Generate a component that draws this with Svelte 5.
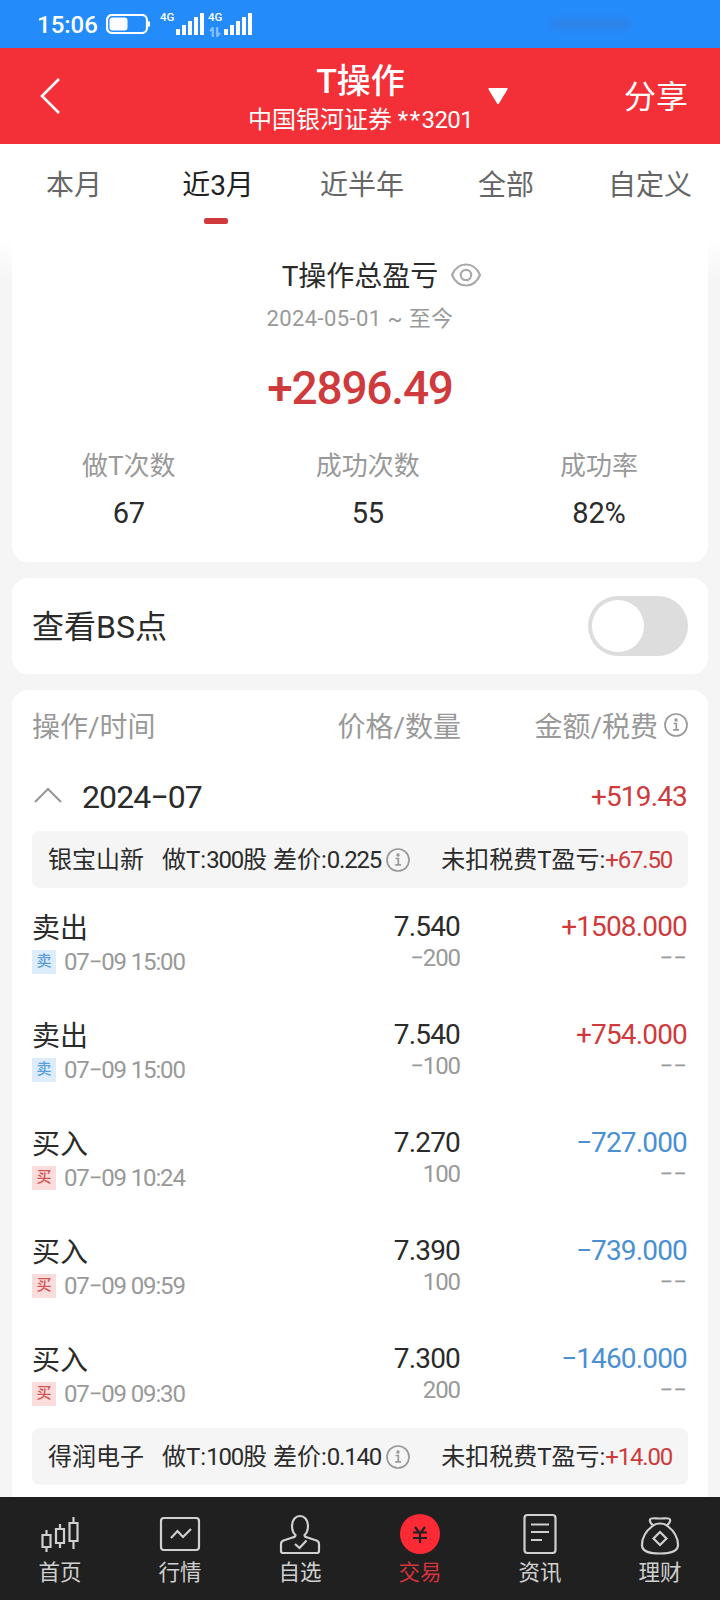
<script>
  const tabs = ["本月", "近3月", "近半年", "全部", "自定义"];
  let activeTab = $state("近3月");
  let showPoints = $state(false);
  let open = $state(true);

  const stats = [
    { label: "做T次数", value: "67" },
    { label: "成功次数", value: "55" },
    { label: "成功率", value: "82%" },
  ];

  const groups = [
    {
      name: "银宝山新",
      shares: 300,
      diff: "0.225",
      profit: "+67.50",
      trades: [
        { side: "sell", time: "07−09 15:00", price: "7.540", qty: "−200", amount: "+1508.000" },
        { side: "sell", time: "07−09 15:00", price: "7.540", qty: "−100", amount: "+754.000" },
        { side: "buy", time: "07−09 10:24", price: "7.270", qty: "100", amount: "−727.000" },
        { side: "buy", time: "07−09 09:59", price: "7.390", qty: "100", amount: "−739.000" },
        { side: "buy", time: "07−09 09:30", price: "7.300", qty: "200", amount: "−1460.000" },
      ],
    },
    { name: "得润电子", shares: 100, diff: "0.140", profit: "+14.00", trades: [] },
  ];

  const nav = [
    { id: "home", label: "首页" },
    { id: "market", label: "行情" },
    { id: "watch", label: "自选" },
    { id: "trade", label: "交易" },
    { id: "news", label: "资讯" },
    { id: "wealth", label: "理财" },
  ];
  let activeNav = $state("trade");
</script>

{#snippet infoIcon()}
  <svg class="info" viewBox="0 0 24 24" width="24" height="24">
    <circle cx="12" cy="12" r="11" />
    <path d="M9.6 10.5h2.7v6.3M9.2 16.8h5.8" />
    <circle class="info__dot" cx="12" cy="7" r="1.7" />
  </svg>
{/snippet}

{#snippet signal()}
  <svg class="signal" viewBox="0 0 28 24" width="28" height="24">
    <path d="M2 17v6M8 13v10M14 9v14M20 5v18M26 1v22" />
  </svg>
{/snippet}

<div class="app">
  <div class="status">
    <span class="status__time">15:06</span>
    <svg class="battery" viewBox="0 0 44 20" width="44" height="20">
      <rect x="1" y="1" width="40" height="18" rx="5" />
      <path d="M43 7.5v5" />
      <rect class="battery__level" x="3.5" y="3.5" width="18" height="13" rx="3" />
    </svg>
    <span class="status__net">4G</span>
    {@render signal()}
    <span class="status__net status__net--data">
      4G
      <svg viewBox="0 0 12 10" width="12" height="10"><path d="M3.8 10V1L1 4M8.2 0v9L11 6" /></svg>
    </span>
    {@render signal()}
    <span class="status__haze"></span>
  </div>

  <header class="header">
    <button class="header__back" aria-label="返回">
      <svg viewBox="0 0 20 36" width="20" height="36"><path d="M19 1 2 18l17 17" /></svg>
    </button>
    <div class="header__center">
      <h1 class="header__title">T操作</h1>
      <div class="header__account">中国银河证券 <span class="stars">**</span><span class="num">3201</span></div>
    </div>
    <svg class="header__caret" viewBox="0 0 20 16" width="20" height="16">
      <path d="M1.5 1h17L10 15z" />
    </svg>
    <button class="header__share">分享</button>
  </header>

  <nav class="tabs">
    {#each tabs as tab}
      <button class="tab" class:tab--active={tab === activeTab} onclick={() => (activeTab = tab)}>
        <span class="tab__label">{tab}</span>
      </button>
    {/each}
  </nav>

  <main class="content">
    <section class="card summary">
      <h2 class="summary__title">
        <span>T操作总盈亏</span>
        <svg class="eye" viewBox="0 0 30 24" width="30" height="24">
          <path d="M1 12C4 5 9 1.5 15 1.5S26 5 29 12c-3 7-8 10.500-14 10.500S4 19 1 12z" />
          <circle cx="15" cy="12" r="5.200" />
        </svg>
      </h2>
      <div class="summary__range">2024-05-01 ~ 至今</div>
      <div class="summary__total num">+2896.49</div>
      <div class="stats">
        {#each stats as stat}
          <div class="stat">
            <span class="stat__label">{stat.label}</span>
            <span class="stat__value num">{stat.value}</span>
          </div>
        {/each}
      </div>
    </section>

    <section class="card points">
      <span class="points__label">查看BS点</span>
      <button
        class="switch"
        class:switch--on={showPoints}
        aria-label="查看BS点"
        onclick={() => (showPoints = !showPoints)}
      ></button>
    </section>

    <section class="card records">
      <div class="records__head">
        <span>操作/时间</span>
        <span class="right">价格/数量</span>
        <span class="records__fee">金额/税费{@render infoIcon()}</span>
      </div>
      <button class="month" onclick={() => (open = !open)}>
        <svg class="month__arrow" viewBox="0 0 30 18" width="30" height="18"><path d="M2 16 15 3l13 13" /></svg>
        <span class="month__name num">2024−07</span>
        <span class="month__total num">+519.43</span>
      </button>

      {#if open}
        {#each groups as group}
          <div class="group">
            <span class="group__name">{group.name}</span>
            <span class="group__detail">做T:<span class="num">{group.shares}</span>股 差价:<span class="num">{group.diff}</span></span>
            {@render infoIcon()}
            <span class="group__profit">未扣税费T盈亏:<span class="num up">{group.profit}</span></span>
          </div>
          {#each group.trades as trade}
            <div class="trade">
              <div class="trade__cell trade__cell--left">
                <span class="trade__side">{trade.side === "sell" ? "卖出" : "买入"}</span>
                <span class="trade__time num">
                  <i class="tag tag--{trade.side}">{trade.side === "sell" ? "卖" : "买"}</i>{trade.time}
                </span>
              </div>
              <div class="trade__cell">
                <span class="trade__main num">{trade.price}</span>
                <span class="trade__sub num">{trade.qty}</span>
              </div>
              <div class="trade__cell">
                <span class="trade__main num {trade.side === 'sell' ? 'up' : 'down'}">{trade.amount}</span>
                <span class="trade__sub trade__sub--empty">−−</span>
              </div>
            </div>
          {/each}
        {/each}
      {/if}
    </section>
  </main>

  <nav class="bottom">
    {#each nav as item}
      <button class="bottom__item" class:bottom__item--active={item.id === activeNav} onclick={() => (activeNav = item.id)}>
        <svg viewBox="0 0 44 44" width="44" height="44">
          {#if item.id === "home"}
            <path d="M4.500 23h8v12h-8zM8.500 18v5M8.500 35v5M18 17h8v14h-8zM22 12v5M22 31v5M31.500 11h8v18h-8zM35.500 5v6M35.500 29v8" />
          {:else if item.id === "market"}
            <rect x="3" y="6" width="38" height="32" rx="3" />
            <path d="m13 26 6.500-7 5.500 6 8-8" />
          {:else if item.id === "watch"}
            <path d="M17.500 23C14.500 20.500 14 17 14 13.500 14 8 17.500 4 22 4s8 4 8 9.500c0 3.500-.5 7-3.500 9.500 0 2 1 2 3 2.500l9 3c2 .8 2.500 1.800 2.500 3.500v7c0 1.500-.5 2-2 2H5c-1.500 0-2-.5-2-2v-7c0-1.700.5-2.700 2.500-3.500l9-3c2-.5 3-.5 3-2.500z" />
            <path d="m17 32 4.500 4 7-7.500" />
          {:else if item.id === "trade"}
            <circle class="coin" cx="22" cy="22" r="20" />
            <path class="yen" d="m17 15 5 6.500 5-6.500M22 21v10M15 20.500h14M15 26h14" />
          {:else if item.id === "news"}
            <rect x="6.500" y="3" width="31" height="38" rx="3" />
            <path d="M13 12.500h18M13 20h18M13 28h11" />
          {:else}
            <path d="M14.500 13c-1.500-1.500-3-4-2.500-5.500C12.700 5.300 17 6.500 22 6.500s9.300-1.200 10 1c.5 1.500-1 4-2.500 5.500" />
            <path d="M14.500 14c2-1.800 4.500-2.500 7.500-2.500s5.500.7 7.500 2.500c6.500 5 10.500 12 10.500 19 0 7-8 8.500-18 8.500S4 40 4 33c0-7 4-14 10.500-19z" />
            <path d="m22 20 6.500 6.500L22 33l-6.500-6.500z" />
          {/if}
        </svg>
        <span>{item.label}</span>
      </button>
    {/each}
  </nav>
</div>

<style>
  :global(body) {
    background: #f5f5f5;
  }

  .app {
    display: flex;
    flex-direction: column;
    width: 720px;
    height: 1600px;
    overflow: hidden;
    background: #f5f5f5;
    color: #2b2b2b;
    font-family: Roboto, "Noto Sans CJK SC", sans-serif;
  }

  button {
    padding: 0;
    border: 0;
    background: none;
    color: inherit;
    font: inherit;
  }

  h1,
  h2 {
    margin: 0;
    font-weight: 400;
  }

  svg {
    flex: none;
    fill: none;
    stroke: currentColor;
    stroke-width: 2.2;
  }

  .num {
    font-weight: 450;
    letter-spacing: -0.03em;
  }

  .up {
    color: #cf3a3c;
  }

  .down {
    color: #4a90d2;
  }

  .right {
    text-align: right;
  }

  /* status bar */
  .status {
    flex: none;
    display: flex;
    align-items: center;
    height: 48px;
    padding-left: 37px;
    background: #248bfb;
    color: #fff;
  }

  .status__time {
    width: 69px;
    padding-top: 2px;
    font-size: 24px;
    font-weight: 500;
    line-height: 46px;
  }

  .battery__level {
    fill: #fff;
    stroke: none;
  }

  .status__net {
    align-self: flex-start;
    width: 15px;
    margin: 10px 1px 0 10px;
    font-size: 11.5px;
    font-weight: 500;
    line-height: 15px;
  }

  .status__net--data {
    display: flex;
    flex-direction: column;
    margin-left: 4px;
  }

  .status__net--data svg {
    margin: 2px 0 0 1px;
    opacity: 0.45;
  }

  .signal {
    stroke-width: 4;
  }

  .status__haze {
    width: 80px;
    height: 8px;
    margin-left: 298px;
    border-radius: 4px;
    background: #3b78cc;
    filter: blur(4px);
    opacity: 0.55;
  }

  /* header */
  .header {
    flex: none;
    display: grid;
    grid-template-columns: 240px 240px 28px 1fr;
    align-items: center;
    height: 96px;
    background: #f32f38;
    color: #fff;
  }

  .header__back {
    display: flex;
    padding-left: 40px;
  }

  .header__back svg {
    stroke-width: 2.6;
  }

  .header__center {
    display: flex;
    flex-direction: column;
    align-items: center;
    padding: 5px 0 0 1px;
    white-space: nowrap;
  }

  .header__title {
    font-size: 34px;
    font-weight: 500;
    line-height: 42px;
  }

  .header__account {
    font-size: 24px;
    line-height: 36px;
  }

  .header__account .num {
    letter-spacing: -0.6px;
  }

  .stars {
    letter-spacing: 1.5px;
  }

  .header__caret {
    margin-left: 8px;
    fill: #fff;
    stroke-linejoin: round;
  }

  .header__share {
    padding: 0 32px 4px 0;
    font-size: 32px;
    text-align: right;
  }

  /* period tabs */
  .tabs {
    flex: none;
    display: grid;
    grid-template-columns: repeat(5, 144px);
    height: 96px;
    background: #fff;
  }

  .tab {
    display: flex;
    flex-direction: column;
    align-items: center;
    padding-top: 21px;
    color: #666;
    font-size: 28px;
    line-height: 42px;
  }

  .tab__label {
    padding-left: 4px;
  }

  .tab--active {
    color: #222;
  }

  .tab--active::after {
    content: "";
    width: 24px;
    height: 6px;
    margin-top: 11px;
    border-radius: 2px;
    background: #cf3a3c;
  }

  /* cards */
  .content {
    flex: 1;
    display: flex;
    flex-direction: column;
    gap: 16px;
    min-height: 0;
    padding: 0 12px;
    overflow: hidden;
    background: linear-gradient(#fff, #f5f5f5 40px);
  }

  .card {
    flex: none;
    border-radius: 16px;
    background: #fff;
  }

  .summary {
    display: flex;
    flex-direction: column;
    align-items: center;
    height: 322px;
    border-radius: 0 0 16px 16px;
  }

  .summary__title {
    display: flex;
    align-items: center;
    gap: 13px;
    margin: 15px -43px 0 0;
    font-size: 28px;
    line-height: 40px;
  }

  .summary__title span {
    padding-top: 3px;
    line-height: 37px;
  }

  .eye {
    color: #aaa;
  }

  .summary__range {
    margin-top: 8px;
    color: #999;
    font-size: 22px;
    letter-spacing: 0.4px;
    line-height: 32px;
  }

  .summary__total {
    margin-top: 23px;
    color: #cf3a3c;
    font-size: 46px;
    font-weight: 500;
    letter-spacing: -1.2px;
    line-height: 60px;
  }

  .stats {
    align-self: stretch;
    display: flex;
    justify-content: space-between;
    margin-top: 30px;
    padding: 0 70px;
  }

  .stat {
    display: flex;
    flex-direction: column;
    align-items: center;
  }

  .stat__label {
    color: #999;
    font-size: 26px;
    line-height: 36px;
  }

  .stat__value {
    margin-top: 9px;
    font-size: 29px;
    letter-spacing: -0.2px;
    line-height: 40px;
  }

  .points {
    display: flex;
    align-items: center;
    justify-content: space-between;
    height: 96px;
    padding: 0 20px;
    font-size: 32px;
  }

  .points__label {
    padding-bottom: 4px;
  }

  .switch {
    display: flex;
    width: 100px;
    height: 60px;
    padding: 4px;
    border-radius: 30px;
    background: #ddd;
  }

  .switch::before {
    content: "";
    width: 52px;
    height: 52px;
    border-radius: 50%;
    background: #fff;
  }

  .switch--on {
    justify-content: flex-end;
    background: #cf3a3c;
  }

  /* trade records */
  .records {
    flex: 1;
    padding: 0 20px;
    border-radius: 16px 16px 0 0;
  }

  .records__head,
  .trade {
    display: grid;
    grid-template-columns: 200px 229px 227px;
  }

  .records__head {
    align-items: center;
    height: 72px;
    padding-bottom: 2px;
    box-sizing: border-box;
    color: #999;
    font-size: 28px;
  }

  .records__fee {
    display: flex;
    align-items: center;
    justify-content: flex-end;
    gap: 6px;
  }

  .info {
    color: #999;
    stroke-width: 1.7;
  }

  .info__dot {
    fill: currentColor;
    stroke: none;
  }

  .month {
    display: flex;
    align-items: center;
    width: 100%;
    height: 69px;
    padding: 0 1px;
  }

  .month__arrow {
    margin-top: -4px;
    color: #999;
  }

  .month__name {
    margin-left: 19px;
    font-size: 32px;
    letter-spacing: -0.9px;
  }

  .month__total {
    margin-left: auto;
    color: #cf3a3c;
    font-size: 28px;
  }

  .group {
    display: flex;
    align-items: center;
    height: 57px;
    padding: 0 16px;
    border-radius: 8px;
    background: #f5f5f5;
    font-size: 24px;
    line-height: 34px;
    white-space: nowrap;
  }

  .group__detail {
    margin: 0 5px 0 18px;
  }

  .group__profit {
    margin-left: auto;
  }

  .group .num {
    letter-spacing: -1.2px;
  }

  .trade {
    height: 108px;
  }

  .trade__cell {
    display: flex;
    flex-direction: column;
    align-items: flex-end;
    padding: 21px 1px 0 0;
  }

  .trade__cell--left {
    align-items: flex-start;
  }

  .trade__side {
    margin-top: 1px;
    font-size: 28px;
    line-height: 37px;
  }

  .trade__main {
    font-size: 28px;
    line-height: 36px;
  }

  .trade__time {
    display: flex;
    align-items: center;
    gap: 8px;
    color: #999;
    font-size: 24px;
    letter-spacing: -1.15px;
    line-height: 30px;
  }

  .trade__sub {
    color: #999;
    font-size: 24px;
    letter-spacing: -1.1px;
    line-height: 27px;
  }

  .trade__sub--empty {
    letter-spacing: 0;
  }

  .tag {
    width: 24px;
    height: 24px;
    font-size: 15px;
    font-style: normal;
    letter-spacing: 0;
    line-height: 23px;
    text-align: center;
  }

  .tag--sell {
    background: #dcecfb;
    color: #5a9edb;
  }

  .tag--buy {
    background: #f9dcdb;
    color: #d35452;
  }

  /* bottom navigation */
  .bottom {
    flex: none;
    display: grid;
    grid-template-columns: repeat(6, 120px);
    height: 103px;
    background: #202020;
    color: #d0d0d0;
  }

  .bottom__item {
    display: flex;
    flex-direction: column;
    align-items: center;
    padding-top: 15px;
    font-size: 21.5px;
    line-height: 34px;
  }

  .bottom__item--active {
    color: #d8323a;
  }

  .coin {
    fill: #fb2a35;
    stroke: none;
  }

  .yen {
    stroke: #202020;
  }
</style>
